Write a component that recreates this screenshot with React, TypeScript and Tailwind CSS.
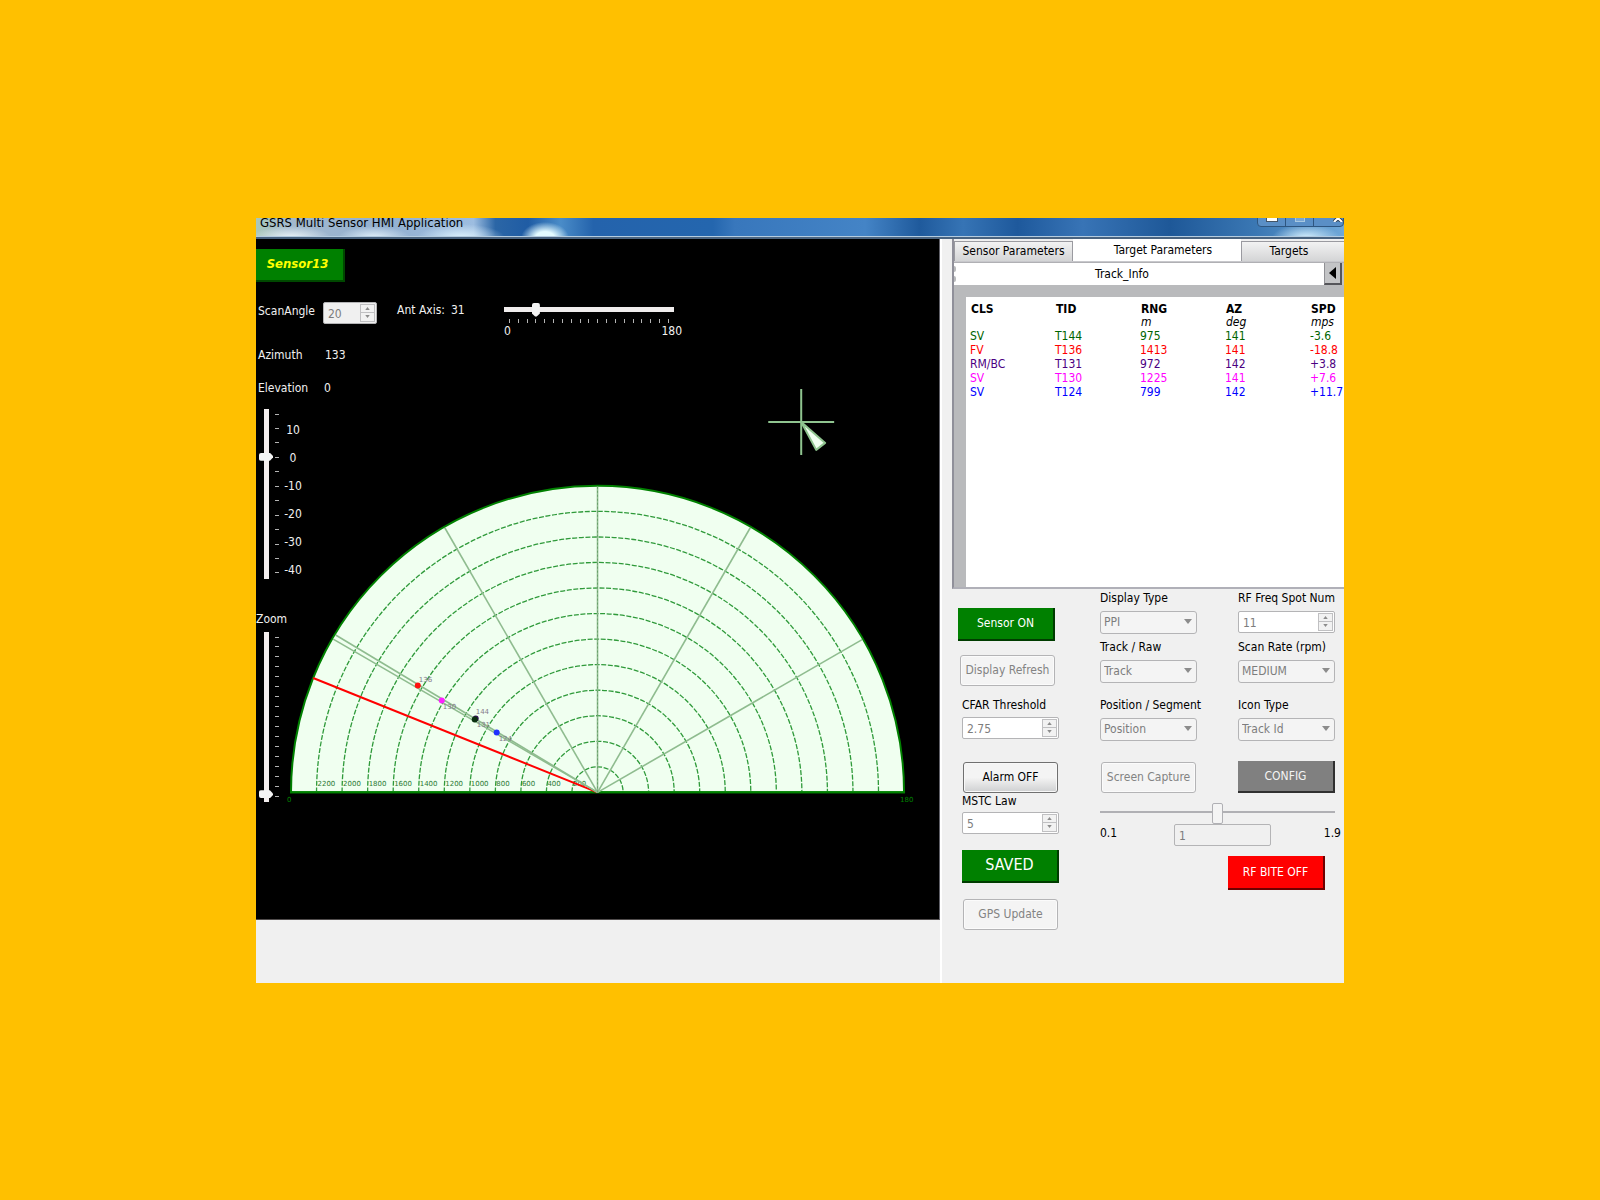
import React from "react";

const R = 307;
const CX = 308;
const CY = 417;

const polar = (deg: number, r: number) => {
  const a = (deg * Math.PI) / 180;
  return { x: CX - r * Math.cos(a), y: CY - r * Math.sin(a) };
};

const targets = [
  { cls: "SV", tid: "T144", rng: "975", az: "141", spd: "-3.6", color: "text-[#006400]" },
  { cls: "FV", tid: "T136", rng: "1413", az: "141", spd: "-18.8", color: "text-[#ff0000]" },
  { cls: "RM/BC", tid: "T131", rng: "972", az: "142", spd: "+3.8", color: "text-[#4b0082]" },
  { cls: "SV", tid: "T130", rng: "1225", az: "141", spd: "+7.6", color: "text-[#ff00ff]" },
  { cls: "SV", tid: "T124", rng: "799", az: "142", spd: "+11.7", color: "text-[#0000ff]" },
];

const plots = [
  { id: "136", x: 128, y: 310, lx: 129, ly: 306, color: "#ff1010" },
  { id: "130", x: 152, y: 325, lx: 153, ly: 334, color: "#ff20ff" },
  { id: "131", x: 186, y: 343, lx: 187, ly: 352, color: "#301050" },
  { id: "144", x: 185, y: 344, lx: 186, ly: 339, color: "#0a3010" },
  { id: "124", x: 207, y: 357, lx: 209, ly: 366, color: "#2030ff" },
];

function Scope() {
  return (
    <svg viewBox="0 0 650 440" className="block w-full overflow-visible" role="img" aria-label="Radar scope">
      <g stroke="#8fc48f" strokeWidth="2" fill="none">
        <path d="M512 13V79M479 46H545" />
        <path d="M512 46L527 74L536 67Z" fill="#f0fff0" strokeLinejoin="round" />
      </g>
      <path d={`M${CX - R} ${CY}A${R} ${R} 0 0 1 ${CX + R} ${CY}Z`} fill="#f0fff0" stroke="#008000" strokeWidth="2" />
      {Array.from({ length: 11 }, (_, i) => {
        const r = (R * (i + 1)) / 12;
        return (
          <path
            key={i}
            d={`M${CX - r} ${CY}A${r} ${r} 0 0 1 ${CX + r} ${CY}`}
            fill="none"
            stroke="#2f9a3a"
            strokeWidth="1.3"
            strokeDasharray="5 1.6"
          />
        );
      })}
      <g fill="#2c7a34" fontSize="7" fontFamily="DejaVu Sans, sans-serif">
        {Array.from({ length: 11 }, (_, i) => (
          <text key={i} x={CX - (R * (i + 1)) / 12 + 1} y={CY - 6}>
            {(i + 1) * 200}
          </text>
        ))}
      </g>
      <path d={`M${CX - R - 1} ${CY}H${CX + R + 1}`} stroke="#008000" strokeWidth="2" />
      <path d={`M${CX} ${CY}L${polar(21.9, R).x} ${polar(21.9, R).y}`} stroke="#ff0000" strokeWidth="2" />
      {[30.1, 31, 60, 90, 120, 150].map((deg) => (
        <path key={deg} d={`M${CX} ${CY}L${polar(deg, R - 1).x} ${polar(deg, R - 1).y}`} stroke="#8fbc8f" strokeWidth="1.6" />
      ))}
      <path d={`M${CX} ${CY}V${CY - R}`} stroke="#6a9f6a" strokeWidth="1" strokeDasharray="2 2" />
      {plots.map((p) => (
        <g key={p.id}>
          <text x={p.lx} y={p.ly} fontSize="7" fontFamily="DejaVu Sans, sans-serif" fill="#857a8a">
            {p.id}
          </text>
          <circle cx={p.x} cy={p.y} r="3" fill={p.color} />
        </g>
      ))}
      <g fill="#008000" fontSize="7" fontFamily="DejaVu Sans, sans-serif">
        <text x="-3" y="427">0</text>
        <text x="611" y="427">180</text>
      </g>
    </svg>
  );
}

function Arrow({ up }: { up?: boolean }) {
  return (
    <svg viewBox="0 0 6 4" className="h-[3px] w-[5px]" aria-hidden="true">
      <path d={up ? "M0 4L3 0L6 4Z" : "M0 0L3 4L6 0Z"} fill="#8c8c8c" />
    </svg>
  );
}

function Spin({ id, value, dim }: { id: string; value: number; dim?: boolean }) {
  return (
    <div className={`flex h-[22px] w-full rounded-[2px] border border-[#b4b4b6] p-px ${dim ? "bg-[#f0f0f0]" : "bg-white"}`}>
      <input
        id={id}
        type="number"
        step="any"
        disabled
        defaultValue={value}
        className="min-w-0 flex-1 appearance-none bg-transparent pt-0.5 pl-[3px] text-[#7d7d7d] [-moz-appearance:textfield] [&::-webkit-inner-spin-button]:appearance-none"
      />
      <div className="flex w-[15px] flex-col">
        <button disabled aria-label="Increase" className="flex flex-1 items-center justify-center border border-[#c0c0c2] bg-[#f2f2f2]">
          <Arrow up />
        </button>
        <button disabled aria-label="Decrease" className="flex flex-1 items-center justify-center border border-t-0 border-[#c0c0c2] bg-[#f2f2f2]">
          <Arrow />
        </button>
      </div>
    </div>
  );
}

function Combo({ id, label, value }: { id: string; label: string; value: string }) {
  return (
    <div className="flex flex-col">
      <label htmlFor={id} className="h-5 leading-4 whitespace-nowrap">
        {label}
      </label>
      <div className="relative mt-px h-[23px]">
        <select
          id={id}
          disabled
          className="h-full w-full appearance-none rounded-[3px] border border-[#b4b4b6] bg-[#f4f4f4] pl-[3px] text-[#7d7d7d] opacity-100"
        >
          <option>{value}</option>
        </select>
        <svg viewBox="0 0 8 5" className="pointer-events-none absolute top-2 right-[5px] h-[5px] w-2" aria-hidden="true">
          <path d="M0 0H8L4 5Z" fill="#8c8c8c" />
        </svg>
      </div>
    </div>
  );
}

const flat = "rounded-[3px] border border-[#b4b4b6] bg-[#f4f4f4] text-[#838383] shadow-[inset_0_0_0_1px_#fbfbfb]";

function VSlider({ id, min, max, value, ticks }: { id: string; min: number; max: number; value: number; ticks: number }) {
  return (
    <div className="flex h-[170px]">
      <input
        id={id}
        type="range"
        min={min}
        max={max}
        defaultValue={value}
        className="ml-[3px] h-full w-3.5 appearance-none bg-[linear-gradient(90deg,transparent_5px,#f4eeee_5px,#f4eeee_10px,transparent_10px)] [direction:rtl] [writing-mode:vertical-lr] [&::-webkit-slider-thumb]:h-2 [&::-webkit-slider-thumb]:w-3.5 [&::-webkit-slider-thumb]:appearance-none [&::-webkit-slider-thumb]:rounded-[2px] [&::-webkit-slider-thumb]:bg-[#f4f4f4] [&::-webkit-slider-thumb]:[clip-path:polygon(0_0,78%_0,100%_40%,100%_60%,78%_100%,0_100%)]"
      />
      <div className="ml-0.5 flex w-1 flex-col justify-between py-[5px]">
        {Array.from({ length: ticks }, (_, i) => (
          <span key={i} className="h-px w-1 bg-[#b4b4b4]" />
        ))}
      </div>
    </div>
  );
}

export default function App() {
  return (
    <div className="flex min-h-screen items-center justify-center bg-[#ffc000] font-['DejaVu_Sans_Condensed','DejaVu_Sans',sans-serif] text-xs text-black">
      <main className="w-[68%] overflow-hidden bg-[#f0f0f0]">
        <header className="flex h-[21px] justify-between overflow-hidden border-b-2 border-[#49637f] bg-[radial-gradient(ellipse_40px_12px_at_35px_20px,#f0f8fa,transparent),radial-gradient(ellipse_36px_12px_at_118px_20px,#e6f4fc,transparent),radial-gradient(ellipse_44px_14px_at_205px_20px,#e0f4fe,transparent),radial-gradient(ellipse_24px_16px_at_289px_20px,#e4fbff_40%,transparent),radial-gradient(ellipse_34px_14px_at_1050px_20px,#d8f2ff,transparent),linear-gradient(90deg,#a9c8ba,#a3b9cd_3%,#93b0d0_12%,#9dbde0_20%,#2b66a6_22%,#1f5ca4_25%,#4a8cc8_28%,#2463ac_31%,#2466ae_42%,#3877bc_44%,#4484c6_56%,#1f5a9c_61%,#3674b5_65%,#1e599c_70%,#3874b6_76%,#1e5898_84%,#3b78b4_92%,#6fa8d8)] shadow-[inset_0_-1px_0_#b4cce0]">
          <h1 className="ml-1 text-[13px] leading-[10px] whitespace-nowrap">GSRS Multi Sensor HMI Application</h1>
          <div className="-mt-2 flex h-[17px] rounded-b border border-[#2e5680] bg-[#5a8fc6]">
            <button aria-label="Minimize" className="flex w-7 items-end justify-center border-r border-[#2e5680] pb-1">
              <span className="h-1 w-3 border border-t-0 border-[#445566] bg-white" />
            </button>
            <button aria-label="Maximize" className="flex w-7 items-end justify-center border-r border-[#2e5680] pb-1">
              <span className="h-1 w-2.5 border border-t-0 border-[#a8c8e0] bg-[#79a6d4]" />
            </button>
            <button aria-label="Close" className="flex w-[29px] items-end justify-end pb-1">
              <svg viewBox="0 0 10 8" className="h-2 w-2.5" aria-hidden="true">
                <path d="M1 0L9 8M9 0L1 8" stroke="#334455" strokeWidth="4" />
                <path d="M1 0L9 8M9 0L1 8" stroke="#ffffff" strokeWidth="2" />
              </svg>
            </button>
          </div>
        </header>

        <div className="flex">
          <div className="flex min-w-0 flex-1 flex-col">
            <section className="flex h-[681px] flex-col border-r border-b border-r-[#606068] border-b-[#504c4c] bg-black text-[#f0f0f0]">
              <button className="mt-[10px] h-[33px] w-[89px] border-r-2 border-b-2 border-[#004800] bg-[#008000] pr-1 text-[13px] font-bold text-[#ffff00] italic">
                Sensor13
              </button>

              <div className="mt-5 flex h-[36px] items-start">
                <label htmlFor="scan" className="ml-0.5 w-[65px] pt-px leading-4">
                  ScanAngle
                </label>
                <div className="w-[54px]">
                  <Spin id="scan" value={20} dim />
                </div>
                <label htmlFor="axis" className="ml-5 w-[54px] leading-4 whitespace-nowrap">
                  Ant Axis:
                </label>
                <output className="w-[53px] leading-4">31</output>
                <div className="w-[170px]">
                  <input
                    id="axis"
                    type="range"
                    min={0}
                    max={180}
                    defaultValue={31}
                    className="block h-4 w-full appearance-none bg-[linear-gradient(transparent_5px,#f0eded_5px,#f0eded_10px,transparent_10px)] [&::-webkit-slider-thumb]:h-3.5 [&::-webkit-slider-thumb]:w-2 [&::-webkit-slider-thumb]:appearance-none [&::-webkit-slider-thumb]:rounded-[2px] [&::-webkit-slider-thumb]:bg-[#f4f4f4] [&::-webkit-slider-thumb]:[clip-path:polygon(0_0,100%_0,100%_78%,60%_100%,40%_100%,0_78%)]"
                  />
                  <div className="mt-px flex justify-between px-[5px]">
                    {Array.from({ length: 19 }, (_, i) => (
                      <span key={i} className="h-1 w-px bg-[#b4b4b4]" />
                    ))}
                  </div>
                  <div className="-mr-2 flex justify-between leading-4">
                    <span>0</span>
                    <span>180</span>
                  </div>
                </div>
              </div>

              <div className="mt-[3px] flex h-[28px] items-center">
                <span className="ml-0.5 w-[67px]">Azimuth</span>
                <output>133</output>
              </div>

              <div className="mt-[7px] flex">
                <div className="relative z-10 w-[34px] shrink-0">
                  <div className="mt-1 flex h-4 w-20 leading-4">
                    <label htmlFor="elev" className="ml-0.5 w-[66px] shrink-0">
                      Elevation
                    </label>
                    <output>0</output>
                  </div>
                  <div className="mt-[13px] flex w-[60px]">
                    <VSlider id="elev" min={-40} max={15} value={0} ticks={12} />
                    <div className="flex h-[170px] w-7 flex-col justify-between pt-[13px] text-center leading-4">
                      {["10", "0", "-10", "-20", "-30", "-40"].map((v) => (
                        <span key={v}>{v}</span>
                      ))}
                    </div>
                  </div>
                  <label htmlFor="zoom" className="mt-8 block h-4 leading-4">
                    Zoom
                  </label>
                  <div className="mt-[5px]">
                    <VSlider id="zoom" min={0} max={100} value={2} ticks={17} />
                  </div>
                </div>
                <div className="min-w-0 flex-1">
                  <Scope />
                </div>
              </div>
            </section>
            <div className="flex-1" />
          </div>

          <aside className="flex h-[744px] w-[404px] shrink-0 flex-col overflow-hidden border-l-2 border-white">
            <div className="ml-[10px] h-[350px] border-b-2 border-l-2 border-[#b0b0b8] border-l-[#90909a] bg-[#b9babc]">
              <div role="tablist" className="flex h-[23px] border-b border-[#c8c8cc] bg-[#f0f0f0]">
                <button role="tab" className="mt-0.5 w-[119px] border border-b-0 border-[#9a9aa0] bg-linear-to-b from-[#f2f2f2] to-[#d4d5d6]">
                  Sensor Parameters
                </button>
                <button role="tab" aria-selected="true" className="w-[168px] bg-white pl-3">
                  Target Parameters
                </button>
                <button role="tab" className="mt-0.5 flex-1 border border-r-0 border-b-0 border-[#9a9aa0] bg-linear-to-b from-[#f2f2f2] to-[#d4d5d6] pr-2">
                  Targets
                </button>
              </div>
              <div className="flex h-[23px] border-t border-[#b0b0b4] bg-white">
                <div className="flex flex-col gap-1 pt-[3px]">
                  <span className="h-1.5 w-0.5 rounded-r-full bg-[#b9babc]" />
                  <span className="h-1.5 w-0.5 rounded-r-full bg-[#b9babc]" />
                </div>
                <h2 className="flex-1 pr-9 text-center leading-[22px]">Track_Info</h2>
                <button aria-label="Scroll left" className="flex w-[18px] items-center justify-center border-r-2 border-b-2 border-l border-[#55555a] border-l-[#909094] bg-[#c3c4c6]">
                  <svg viewBox="0 0 7 12" className="h-3 w-[7px]" aria-hidden="true">
                    <path d="M7 0V12L0 6Z" />
                  </svg>
                </button>
                <span className="w-0.5 bg-[#c3c4c6]" />
              </div>
              <div className="mt-3 ml-3 h-[290px] bg-white pt-[5px]">
                <table className="w-[425px] table-fixed text-left leading-[14px]">
                  <thead>
                    <tr>
                      {["CLS", "TID", "RNG", "AZ", "SPD"].map((h) => (
                        <th key={h} className="p-0 pl-[5px] font-bold">
                          {h}
                        </th>
                      ))}
                    </tr>
                    <tr>
                      {["", "", "m", "deg", "mps"].map((u, i) => (
                        <td key={i} className="p-0 pl-[5px] leading-[13px] italic">
                          {u}
                        </td>
                      ))}
                    </tr>
                  </thead>
                  <tbody>
                    {targets.map((t) => (
                      <tr key={t.tid} className={t.color}>
                        {[t.cls, t.tid, t.rng, t.az, t.spd].map((c, i) => (
                          <td key={i} className="p-0 pl-1">
                            {c}
                          </td>
                        ))}
                      </tr>
                    ))}
                  </tbody>
                </table>
              </div>
            </div>

            <div className="flex pl-5">
              <div className="flex w-[97px] flex-col">
                <button className="mt-[19px] -ml-1 h-[33px] w-[97px] border-r-2 border-b-2 border-[#003c00] bg-[#008000] text-white">Sensor ON</button>
                <button disabled className={`mt-[14px] -ml-0.5 h-[31px] w-[95px] whitespace-nowrap ${flat}`}>
                  Display Refresh
                </button>
                <label htmlFor="cfar" className="mt-[11px] h-5 leading-4 whitespace-nowrap">
                  CFAR Threshold
                </label>
                <Spin id="cfar" value={2.75} />
                <button className="mt-[23px] ml-px h-[31px] w-[95px] rounded-[3px] border border-[#707070] bg-linear-to-b from-[#f4f4f4] from-50% to-[#cfd0d1] shadow-[inset_0_0_0_1px_#f8f8f8]">
                  Alarm OFF
                </button>
                <label htmlFor="mstc" className="h-[19px] leading-4">
                  MSTC Law
                </label>
                <Spin id="mstc" value={5} />
                <button className="mt-4 h-[33px] border-r-2 border-b-2 border-[#003c00] bg-[#008000] text-base text-white">SAVED</button>
                <button disabled className={`mt-4 ml-px h-[31px] w-[95px] ${flat}`}>
                  GPS Update
                </button>
              </div>

              <div className="ml-[41px] w-[235px] pt-px">
                <div className="grid grid-cols-2 gap-x-[41px]">
                  <Combo id="dtype" label="Display Type" value="PPI" />
                  <div>
                    <label htmlFor="rf" className="block h-5 leading-4 whitespace-nowrap">
                      RF Freq Spot Num
                    </label>
                    <div className="mt-px">
                      <Spin id="rf" value={11} />
                    </div>
                  </div>
                </div>
                <div className="mt-[5px] grid grid-cols-2 gap-x-[41px]">
                  <Combo id="raw" label="Track / Raw" value="Track" />
                  <Combo id="rate" label="Scan Rate (rpm)" value="MEDIUM" />
                </div>
                <div className="mt-[14px] grid grid-cols-2 gap-x-[41px]">
                  <Combo id="pos" label="Position / Segment" value="Position" />
                  <Combo id="icon" label="Icon Type" value="Track Id" />
                </div>
                <div className="mt-5 grid grid-cols-2 gap-x-[41px]">
                  <button disabled className={`mt-px ml-px h-[31px] w-[95px] whitespace-nowrap ${flat}`}>
                    Screen Capture
                  </button>
                  <button className="h-8 border-r-2 border-b-2 border-[#303030] bg-[#808080] text-[#f4f4f4]">CONFIG</button>
                </div>
                <input
                  type="range"
                  aria-label="Gain"
                  min={0.1}
                  max={1.9}
                  step={0.1}
                  defaultValue={1}
                  disabled
                  className="mt-[10px] block h-[21px] w-full appearance-none bg-[linear-gradient(transparent_8px,#b0b0b4_8px,#b0b0b4_10px,transparent_10px)] [&::-webkit-slider-thumb]:h-[21px] [&::-webkit-slider-thumb]:w-[11px] [&::-webkit-slider-thumb]:appearance-none [&::-webkit-slider-thumb]:rounded-[2px] [&::-webkit-slider-thumb]:border [&::-webkit-slider-thumb]:border-[#b0b0b4] [&::-webkit-slider-thumb]:bg-[#f4f4f4]"
                />
                <div className="-mr-[6px] flex justify-between leading-4">
                  <span className="pt-px">0.1</span>
                  <input aria-label="Gain value" disabled defaultValue="1" className="ml-1 h-[22px] w-[97px] rounded-[2px] border border-[#b4b4b6] bg-[#f0f0f0] pt-0.5 pl-1 text-[#7d7d7d]" />
                  <span className="pt-px">1.9</span>
                </div>
                <button className="mt-[10px] ml-32 h-[34px] w-[97px] border-r-2 border-b-2 border-[#700000] bg-[#ff0000] whitespace-nowrap text-white">RF BITE OFF</button>
              </div>
            </div>
          </aside>
        </div>
      </main>
    </div>
  );
}
